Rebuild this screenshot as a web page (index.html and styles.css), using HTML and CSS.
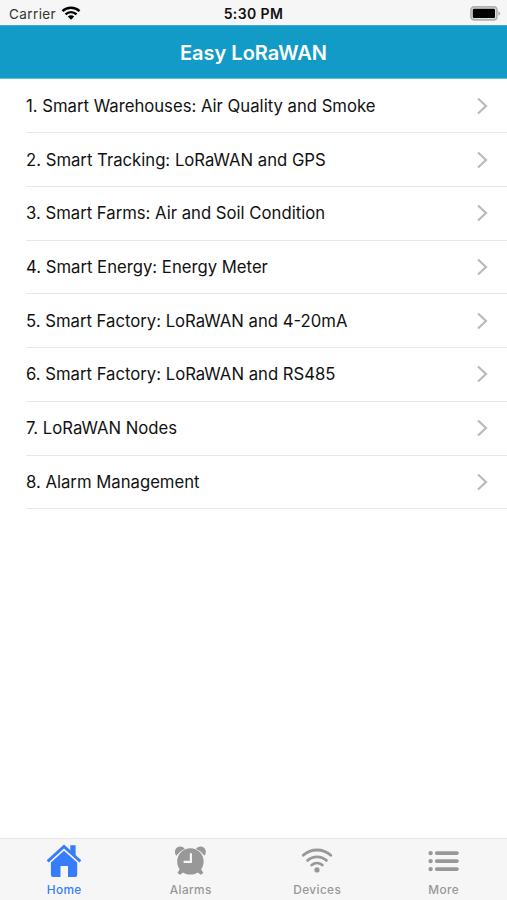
FILE: index.html
```html
<!DOCTYPE html>
<html lang="en">
<head>
    <meta charset="UTF-8">
    <title>Easy LoRaWAN</title>
    <link rel="stylesheet" href="styles.css">
</head>
<body>
    <div class="app">
        <div class="status-bar">
            <div class="carrier">
                <span>Carrier</span>
                <svg width="20" height="14" viewBox="0 0 20 14">
                    <path d="M1.5 5.2C6.2 .7 13.8 .7 18.5 5.2" fill="none" stroke="#000" stroke-width="2.5"/>
                    <path d="M4.5 8.3C7.6 5.4 12.4 5.4 15.5 8.3" fill="none" stroke="#000" stroke-width="2.4"/>
                    <path d="M6.8 10.5C8.6 8.9 11.4 8.9 13.2 10.5L10 13.8Z"/>
                </svg>
            </div>
            <div class="time">5:30 PM</div>
            <div class="battery">
                <svg width="31" height="15" viewBox="0 0 31 15">
                    <rect x=".9" y=".9" width="26" height="13" rx="3.2" fill="#ddd" stroke="#b0b0b0" stroke-width="1.6"/>
                    <rect x="2.8" y="2.8" width="22.2" height="9.2" rx="1.2"/>
                    <path d="M28.4 5Q31.8 7.4 28.4 9.8Z" fill="#aaa"/>
                </svg>
            </div>
        </div>

        <header class="nav-bar">
            <h1>Easy LoRaWAN</h1>
        </header>

        <ul class="menu">
            <li><span>1. Smart Warehouses: Air Quality and Smoke</span><svg class="chevron" viewBox="0 0 12 18"><path d="M2 1.5L10 9L2 16.5"/></svg></li>
            <li><span>2. Smart Tracking: LoRaWAN and GPS</span><svg class="chevron" viewBox="0 0 12 18"><path d="M2 1.5L10 9L2 16.5"/></svg></li>
            <li><span>3. Smart Farms: Air and Soil Condition</span><svg class="chevron" viewBox="0 0 12 18"><path d="M2 1.5L10 9L2 16.5"/></svg></li>
            <li><span>4. Smart Energy: Energy Meter</span><svg class="chevron" viewBox="0 0 12 18"><path d="M2 1.5L10 9L2 16.5"/></svg></li>
            <li><span>5. Smart Factory: LoRaWAN and 4-20mA</span><svg class="chevron" viewBox="0 0 12 18"><path d="M2 1.5L10 9L2 16.5"/></svg></li>
            <li><span>6. Smart Factory: LoRaWAN and RS485</span><svg class="chevron" viewBox="0 0 12 18"><path d="M2 1.5L10 9L2 16.5"/></svg></li>
            <li><span>7. LoRaWAN Nodes</span><svg class="chevron" viewBox="0 0 12 18"><path d="M2 1.5L10 9L2 16.5"/></svg></li>
            <li><span>8. Alarm Management</span><svg class="chevron" viewBox="0 0 12 18"><path d="M2 1.5L10 9L2 16.5"/></svg></li>
        </ul>

        <nav class="tab-bar">
            <div class="tab active">
                <svg width="36" height="34" viewBox="0 0 36 34" fill="currentColor">
                    <path d="M24.3 1.2H29.6V12L24.3 7Z"/>
                    <path d="M18 .6L35.3 16.2L33.5 18.4L18 4.6L2.5 18.4L.7 16.2Z"/>
                    <path d="M18 6.7L31.2 18.5V31Q31.2 33 29.2 33H22V22H14.5V33H7Q4.9 33 4.9 31V18.5Z"/>
                </svg>
                <span>Home</span>
            </div>
            <div class="tab">
                <svg width="36" height="34" viewBox="0.6 0 36 34" fill="currentColor">
                    <path d="M4 11.8C1.2 8.6 2.6 3 7.2 2.5C9.5 2.3 11.5 3.2 12.4 4.9Q7.2 6.9 4 11.8Z"/>
                    <path d="M32 11.8C34.8 8.6 33.4 3 28.8 2.5C26.5 2.3 24.5 3.2 23.6 4.9Q28.8 6.9 32 11.8Z"/>
                    <path d="M8 24L5 28.9L7.7 30.7L12 27.5ZM28 24L31 28.9L28.3 30.7L24 27.5Z"/>
                    <circle cx="18" cy="17.4" r="13.2"/>
                    <path d="M18.5 9.3V17.9H11.2" fill="none" stroke="#f6f6f6" stroke-width="2.2"/>
                </svg>
                <span>Alarms</span>
            </div>
            <div class="tab">
                <svg width="36" height="34" viewBox="0 0 36 34" fill="none" stroke="currentColor" stroke-width="2.8" stroke-linecap="round">
                    <path d="M4.2 11.3C12 4.2 24 4.2 31.8 11.3"/>
                    <path d="M8.6 16.4C14 11.6 22 11.6 27.4 16.4"/>
                    <path d="M12.7 21C15.8 18.4 20.2 18.4 23.3 21"/>
                    <circle cx="18" cy="25.9" r="2.6" fill="currentColor" stroke="none"/>
                </svg>
                <span>Devices</span>
            </div>
            <div class="tab">
                <svg width="36" height="34" viewBox="0 0 36 34" fill="currentColor">
                    <circle cx="4.6" cy="9.1" r="2.2"/>
                    <circle cx="4.6" cy="17.1" r="2.2"/>
                    <circle cx="4.6" cy="25.1" r="2.2"/>
                    <rect x="8.8" y="7.3" width="24" height="3.6" rx="1.8"/>
                    <rect x="8.8" y="15.3" width="24" height="3.6" rx="1.8"/>
                    <rect x="8.8" y="23.3" width="24" height="3.6" rx="1.8"/>
                </svg>
                <span>More</span>
            </div>
        </nav>
    </div>
</body>
</html>
```

FILE: styles.css
```css
* {
    box-sizing: border-box;
}
body {
    margin: 0;
    background-color: #fff;
    color: #111;
    font-family: Inter, "Liberation Sans", sans-serif;
}
svg {
    display: block;
    flex-shrink: 0;
}
.app {
    display: flex;
    flex-direction: column;
    height: 900px;
}
.status-bar {
    display: grid;
    grid-template-columns: 1fr auto 1fr;
    align-items: center;
    height: 25px;
    padding: 2px 6px 0 9px;
    background-color: #f6f6f6;
    font-size: 13.5px;
    line-height: 20px;
}
.carrier {
    display: flex;
    align-items: center;
    gap: 5px;
    color: #333;
    letter-spacing: 0.4px;
}
.carrier svg {
    margin-top: -2px;
}
.time {
    margin-right: 3px;
    font-size: 14px;
    font-weight: 600;
    letter-spacing: 0.4px;
}
.battery {
    display: flex;
    justify-content: flex-end;
}
.nav-bar {
    display: flex;
    align-items: center;
    justify-content: center;
    height: 54px;
    padding-top: 1px;
    background-color: #129bc6;
    border-top: 1px solid #3eaccf;
    border-bottom: 1px solid #5dc0dc;
    color: #fff;
}
.nav-bar h1 {
    margin: 0;
    font-size: 20px;
    font-weight: 600;
    line-height: 24px;
}
.menu {
    flex: 1;
    margin: 0;
    padding: 0 0 0 26px;
    list-style: none;
}
.menu li {
    display: flex;
    align-items: center;
    justify-content: space-between;
    height: 53.7px;
    padding-right: 19px;
    border-bottom: 1px solid #e8e8e8;
    font-size: 16.7px;
}
.menu li:first-child {
    height: 54.4px;
    padding-top: 1px;
}
.chevron {
    width: 12px;
    height: 18px;
    fill: none;
    stroke: #bababa;
    stroke-width: 2.2;
}
.tab-bar {
    display: flex;
    height: 62px;
    padding-left: 1px;
    background-color: #f6f6f6;
    border-top: 1px solid #e6e6e6;
}
.tab {
    display: flex;
    flex: 1;
    flex-direction: column;
    align-items: center;
    padding-top: 5px;
    color: #989898;
    font-size: 11.8px;
    font-weight: 500;
    line-height: 16px;
    letter-spacing: 0.4px;
}
.tab span {
    margin-top: 4px;
}
.tab.active {
    color: #377dfb;
}
```
